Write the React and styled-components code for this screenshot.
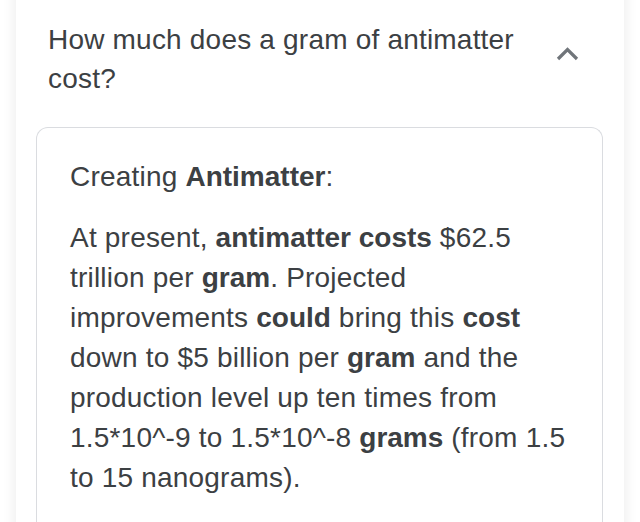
import React from "react";
import styled, { createGlobalStyle } from "styled-components";

const GlobalStyle = createGlobalStyle`
  html, body {
    margin: 0;
    padding: 0;
    background: #ffffff;
    font-family: "Liberation Sans", Arial, sans-serif;
    overflow: hidden;
  }
`;

const Page = styled.div`
  padding: 0 16px;
`;

const Card = styled.div`
  background: #fff;
  margin-top: -20px;
  padding: 40px 45px 0 32px;
  box-shadow: 0 0 14px rgba(0, 0, 0, 0.09);
  min-height: 640px;
`;

const Header = styled.div`
  display: flex;
  align-items: center;
  justify-content: space-between;
  gap: 20px;
`;

const Question = styled.div`
  font-size: 28px;
  line-height: 39px;
  letter-spacing: 0.2px;
  color: #3c4043;
  max-width: 490px;
`;

const Chevron = styled.svg`
  width: 23px;
  height: 14px;
  flex-shrink: 0;
  margin-bottom: 10px;
`;

const Answer = styled.div`
  margin: 29px -24px 0 -12px;
  border: 1px solid #dadce0;
  border-bottom: none;
  border-radius: 12px 12px 0 0;
  padding: 29px 28px 80px 33px;
  color: #3c4043;
  font-size: 28px;
  line-height: 40px;
  letter-spacing: 0.2px;
`;

const Para = styled.p`
  margin: 0 0 ${(p) => p.$gap || 0}px;
  b {
    font-weight: bold;
    letter-spacing: 0;
  }
`;

export default function App() {
  return (
    <Page>
      <GlobalStyle />
      <Card>
        <Header>
          <Question>How much does a gram of antimatter cost?</Question>
          <Chevron viewBox="0 0 23 14">
            <path
              d="M2 12 L11.5 2.5 L21 12"
              fill="none"
              stroke="#70757a"
              strokeWidth="3.2"
            />
          </Chevron>
        </Header>
        <Answer>
          <Para $gap={21}>
            Creating <b>Antimatter</b>:
          </Para>
          <Para>
            At present, <b>antimatter costs</b> $62.5 trillion per <b>gram</b>.
            Projected improvements <b>could</b> bring this <b>cost</b> down to
            $5 billion per <b>gram</b> and the production level up ten times
            from 1.5*10^-9 to 1.5*10^-8 <b>grams</b> (from 1.5 to 15
            nanograms).
          </Para>
        </Answer>
      </Card>
    </Page>
  );
}
